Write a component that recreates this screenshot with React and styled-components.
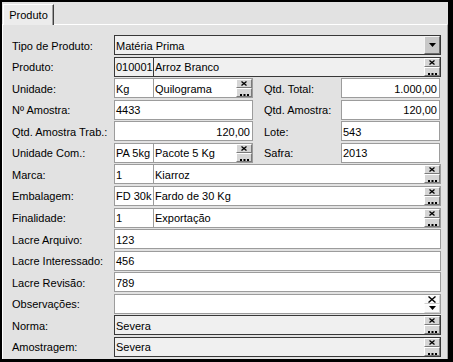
import React from "react";
import styled, { createGlobalStyle } from "styled-components";

const Global = createGlobalStyle`
  html, body { margin: 0; padding: 0; background: #000; }
  body { font-family: "Liberation Sans", Arial, sans-serif; font-size: 11px; color: #000; }
  * { box-sizing: border-box; }
`;

const Window = styled.div`
  width: 453px;
  height: 362px;
  background: #000;
  padding: 2px 5px 3px 2px;
`;

const Frame = styled.div`
  height: 100%;
  background: #e2e2e2;
  display: flex;
  flex-direction: column;
`;

const TabStrip = styled.div`
  height: 22px;
  display: flex;
  align-items: flex-end;
  padding-left: 1px;
`;

const Tab = styled.div`
  width: 51px;
  height: 21px;
  background: #ececec;
  border-top: 1px solid #fff;
  border-left: 1px solid #fff;
  border-right: 1px solid #404040;
  box-shadow: inset -1px 0 0 #a0a0a0;
  display: flex;
  align-items: center;
  justify-content: center;
  margin-bottom: -1px;
  position: relative;
  z-index: 1;
  font-size: 11px;
  padding-bottom: 1px;
`;

const Panel = styled.div`
  flex: 1;
  border-top: 1px solid #fff;
  border-left: 1px solid #fff;
  border-right: 1px solid #a0a0a0;
  padding: 10px 6px 0 9px;
  display: grid;
  grid-auto-rows: 20px;
  row-gap: 1.57px;
`;

const Row = styled.div`
  display: flex;
  align-items: center;
  height: 20px;
`;

const Label = styled.div`
  width: ${(p) => p.$w || 102}px;
  flex: none;
  white-space: nowrap;
  margin-left: ${(p) => p.$ml || 0}px;
  padding-top: 1px;
`;

const Field = styled.div`
  height: 20px;
  width: ${(p) => (p.$w ? `${p.$w}px` : "auto")};
  flex: ${(p) => (p.$w ? "none" : "1")};
  margin-left: ${(p) => p.$ml || 0}px;
  background: ${(p) => (p.$disabled ? "#f0f0f0" : "#fff")};
  border: 1px solid ${(p) => (p.$disabled ? "#383838" : "#9c9c9c")};
  display: flex;
  align-items: stretch;
  white-space: nowrap;
  overflow: hidden;
`;

const Text = styled.span`
  flex: 1;
  display: flex;
  align-items: center;
  justify-content: ${(p) => (p.$right ? "flex-end" : "flex-start")};
  padding: 1px ${(p) => (p.$right ? 2 : 1)}px 0 ${(p) => (p.$right ? 2 : 1)}px;
  overflow: hidden;
`;

const Stack = styled.div`
  width: 16px;
  flex: none;
  display: flex;
  flex-direction: column;
`;

const MiniBtn = styled.div`
  flex: 1;
  background: ${(p) => (p.$plain ? "#fafafa" : "#d6d6d6")};
  border-top: 1px solid ${(p) => (p.$plain ? "#fff" : "#fff")};
  border-left: 1px solid ${(p) => (p.$plain ? "#fff" : "#fff")};
  border-right: 1px solid ${(p) => (p.$plain ? "#d0d0d0" : "#7a7a7a")};
  border-bottom: 1px solid ${(p) => (p.$plain ? "#d0d0d0" : "#7a7a7a")};
  display: flex;
  align-items: ${(p) => p.$align || "center"};
  justify-content: center;
`;

const DropBtn = styled.div`
  width: 16px;
  flex: none;
  background: #c8c8c8;
  border-top: 1px solid #f4f4f4;
  border-left: 1px solid #f4f4f4;
  border-right: 1px solid #6a6a6a;
  border-bottom: 1px solid #6a6a6a;
  display: flex;
  align-items: center;
  justify-content: center;
`;

const XIcon = ({ big }) =>
  big ? (
    <svg width="8" height="7" viewBox="0 0 8 7">
      <path d="M0.5 0.5 L7.5 6.5 M7.5 0.5 L0.5 6.5" stroke="#000" strokeWidth="1.4" />
    </svg>
  ) : (
    <svg width="6" height="5" viewBox="0 0 6 5">
      <path d="M0.5 0.5 L5.5 4.5 M5.5 0.5 L0.5 4.5" stroke="#000" strokeWidth="1.3" />
    </svg>
  );

const Dots = () => (
  <svg width="9" height="2" viewBox="0 0 9 2" style={{ marginBottom: 0 }}>
    <rect x="0" y="0" width="2" height="2" fill="#000" />
    <rect x="3.5" y="0" width="2" height="2" fill="#000" />
    <rect x="7" y="0" width="2" height="2" fill="#000" />
  </svg>
);

const Down = () => (
  <svg width="7" height="4" viewBox="0 0 7 4">
    <path d="M0 0 H7 L3.5 4 Z" fill="#000" />
  </svg>
);

const LookupBtns = () => (
  <Stack>
    <MiniBtn>
      <XIcon />
    </MiniBtn>
    <MiniBtn $align="flex-end">
      <Dots />
    </MiniBtn>
  </Stack>
);

const ClearDropBtns = () => (
  <Stack>
    <MiniBtn $plain>
      <XIcon big />
    </MiniBtn>
    <MiniBtn $plain>
      <Down />
    </MiniBtn>
  </Stack>
);

const Lookup = ({ code, desc, w, disabled }) => (
  <>
    <Field $w={40} $disabled={disabled}>
      <Text>{code}</Text>
    </Field>
    <Field $w={w} $ml={-1} $disabled={disabled}>
      <Text>{desc}</Text>
      <LookupBtns />
    </Field>
  </>
);

export default function App() {
  return (
    <>
      <Global />
      <Window>
        <Frame>
          <TabStrip>
            <Tab>Produto</Tab>
          </TabStrip>
          <Panel>
            <Row>
              <Label>Tipo de Produto:</Label>
              <Field $disabled>
                <Text>Matéria Prima</Text>
                <DropBtn>
                  <Down />
                </DropBtn>
              </Field>
            </Row>
            <Row>
              <Label>Produto:</Label>
              <Lookup code="010001" desc="Arroz Branco" disabled />
            </Row>
            <Row>
              <Label>Unidade:</Label>
              <Lookup code="Kg" desc="Quilograma" w={100} />
              <Label $w={77} $ml={11}>Qtd. Total:</Label>
              <Field $w={99}>
                <Text $right>1.000,00</Text>
              </Field>
            </Row>
            <Row>
              <Label>Nº Amostra:</Label>
              <Field $w={139}>
                <Text>4433</Text>
              </Field>
              <Label $w={77} $ml={11}>Qtd. Amostra:</Label>
              <Field $w={99}>
                <Text $right>120,00</Text>
              </Field>
            </Row>
            <Row>
              <Label>Qtd. Amostra Trab.:</Label>
              <Field $w={139}>
                <Text $right>120,00</Text>
              </Field>
              <Label $w={77} $ml={11}>Lote:</Label>
              <Field $w={99}>
                <Text>543</Text>
              </Field>
            </Row>
            <Row>
              <Label>Unidade Com.:</Label>
              <Lookup code="PA 5kg" desc="Pacote 5 Kg" w={100} />
              <Label $w={77} $ml={11}>Safra:</Label>
              <Field $w={99}>
                <Text>2013</Text>
              </Field>
            </Row>
            <Row>
              <Label>Marca:</Label>
              <Lookup code="1" desc="Kiarroz" />
            </Row>
            <Row>
              <Label>Embalagem:</Label>
              <Lookup code="FD 30k" desc="Fardo de 30 Kg" />
            </Row>
            <Row>
              <Label>Finalidade:</Label>
              <Lookup code="1" desc="Exportação" />
            </Row>
            <Row>
              <Label>Lacre Arquivo:</Label>
              <Field>
                <Text>123</Text>
              </Field>
            </Row>
            <Row>
              <Label>Lacre Interessado:</Label>
              <Field>
                <Text>456</Text>
              </Field>
            </Row>
            <Row>
              <Label>Lacre Revisão:</Label>
              <Field>
                <Text>789</Text>
              </Field>
            </Row>
            <Row>
              <Label>Observações:</Label>
              <Field>
                <Text></Text>
                <ClearDropBtns />
              </Field>
            </Row>
            <Row>
              <Label>Norma:</Label>
              <Field $disabled>
                <Text>Severa</Text>
                <LookupBtns />
              </Field>
            </Row>
            <Row>
              <Label>Amostragem:</Label>
              <Field $disabled>
                <Text>Severa</Text>
                <LookupBtns />
              </Field>
            </Row>
          </Panel>
        </Frame>
      </Window>
    </>
  );
}
